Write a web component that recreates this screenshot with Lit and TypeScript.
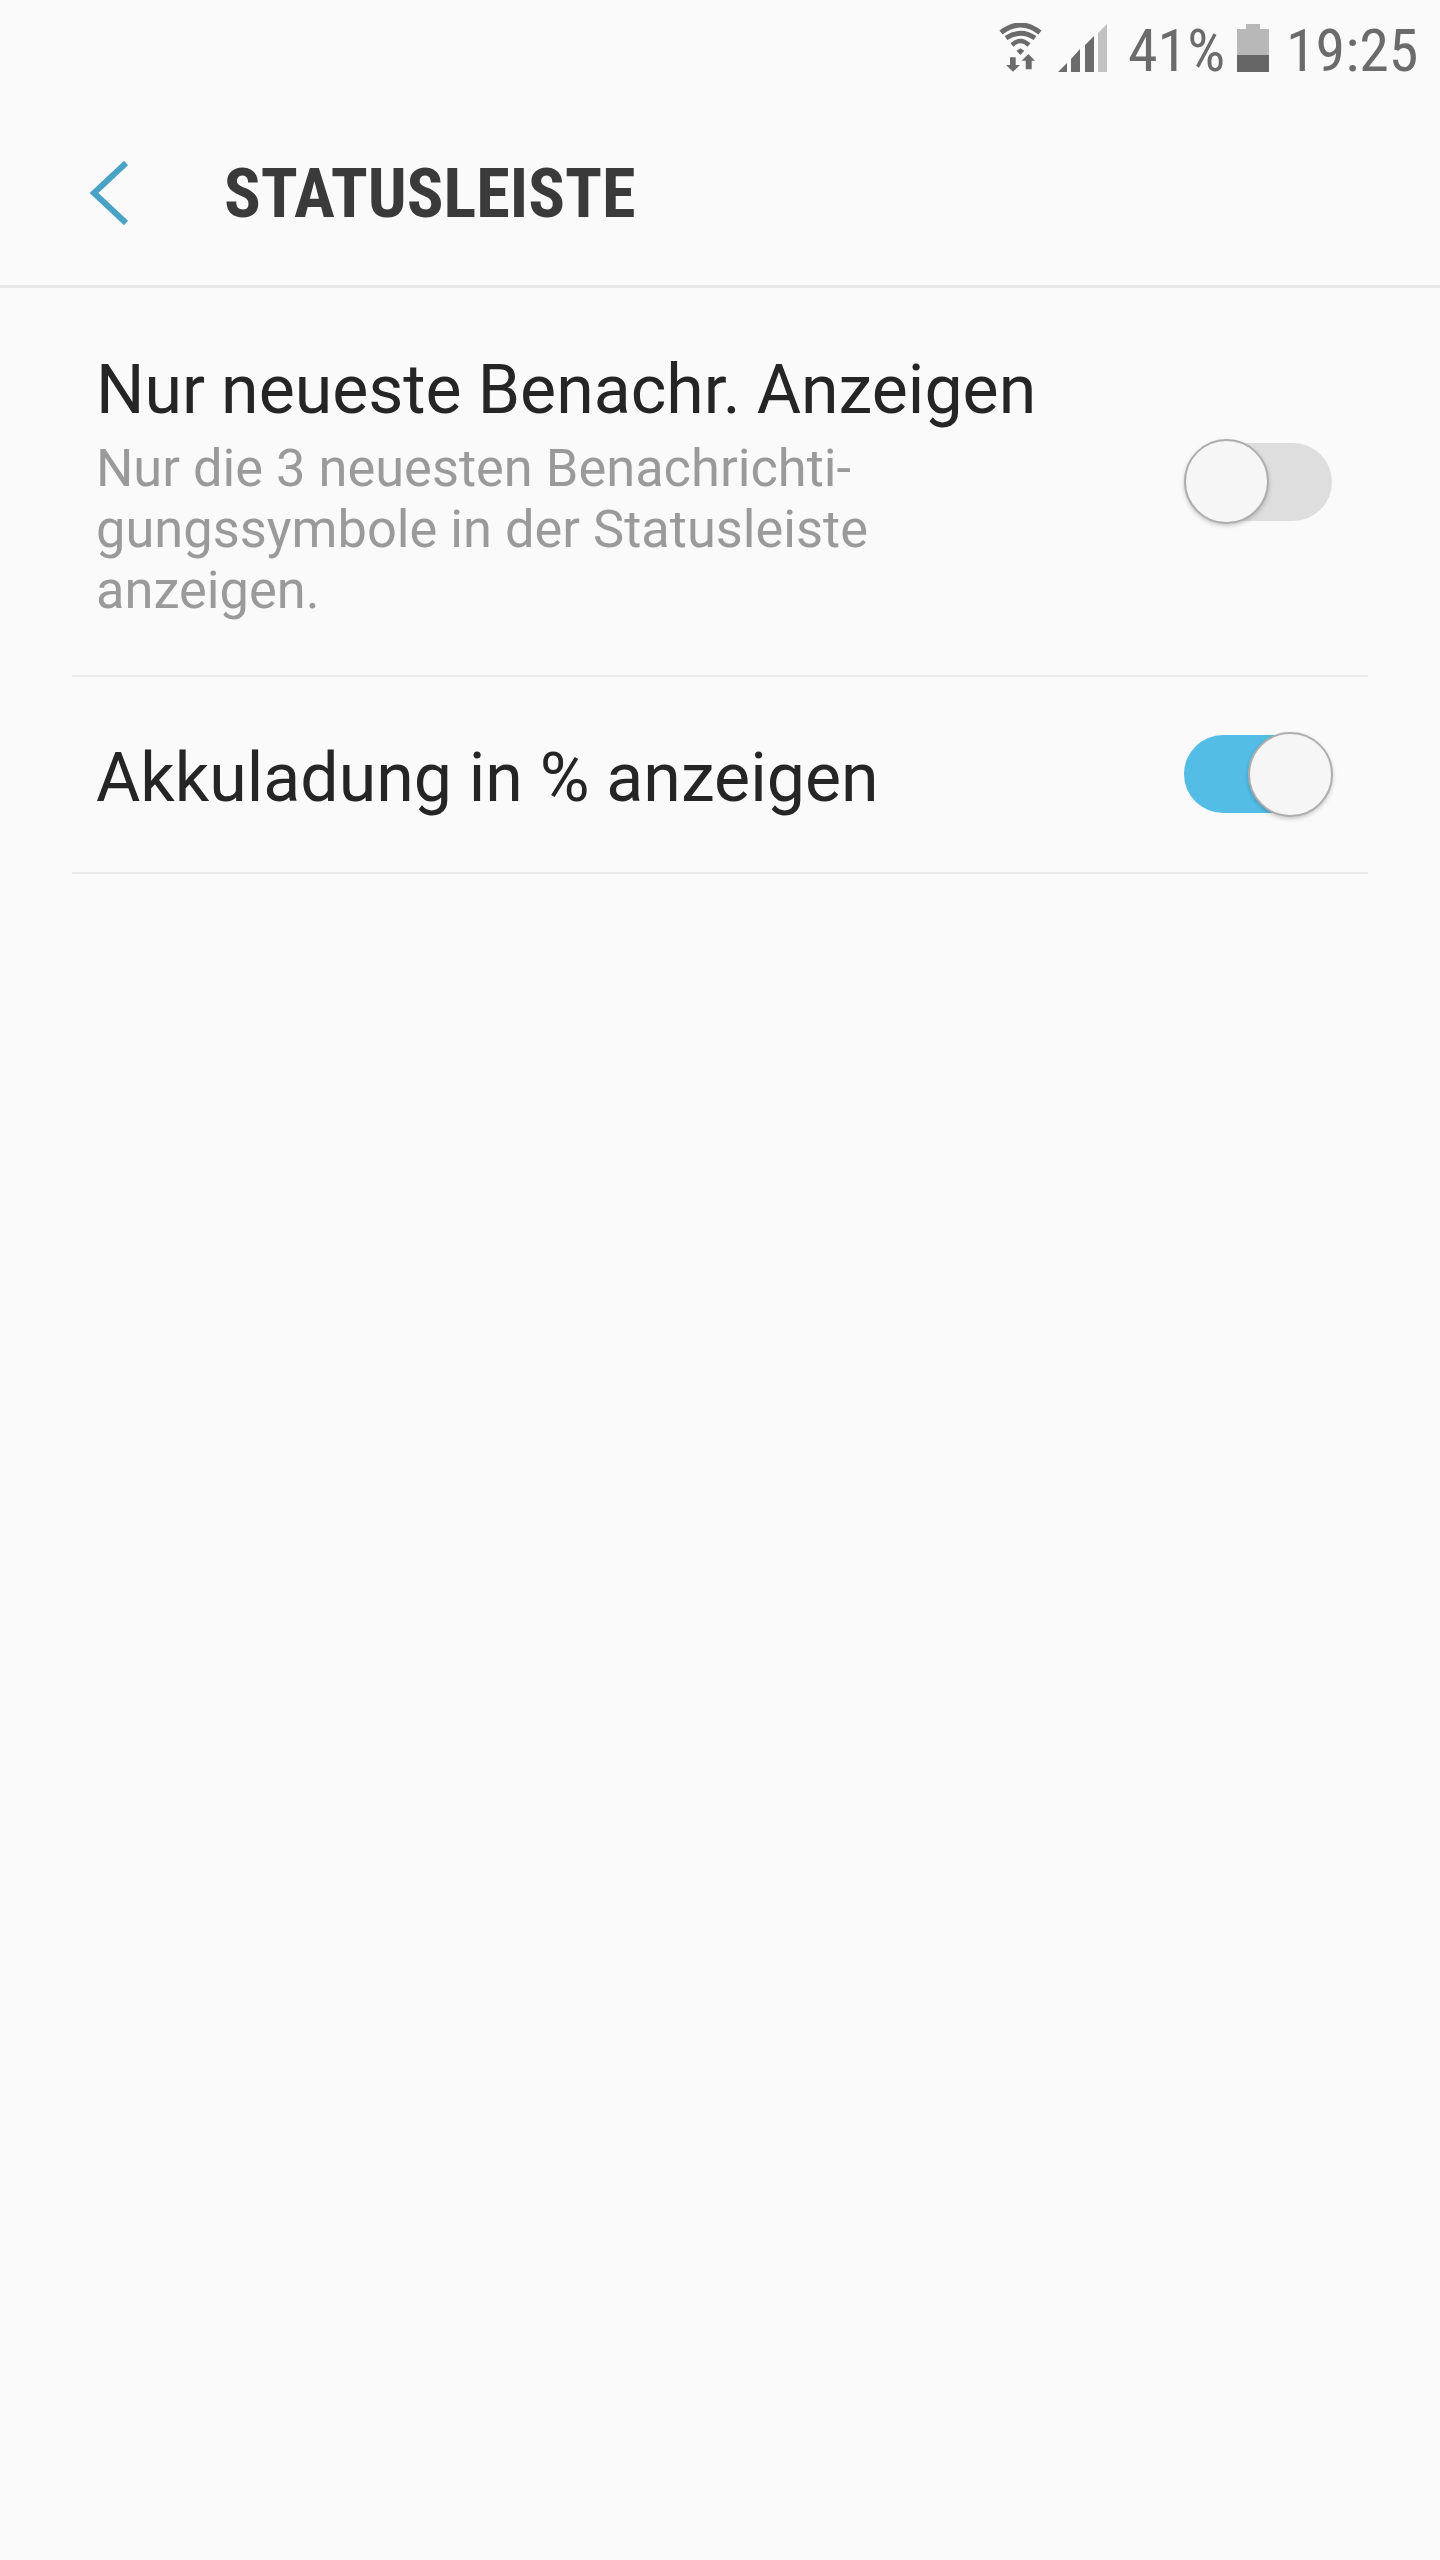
import { LitElement, html, css } from "lit";
import { customElement } from "lit/decorators.js";

@customElement("app-root")
export class AppRoot extends LitElement {
  static styles = css`
    :host { display: block; width: 1440px; height: 2560px; background: #fafafa; font-family: Roboto, "Liberation Sans", sans-serif; overflow: hidden; }
    .status { height: 96px; display: flex; align-items: flex-start; justify-content: flex-end; padding: 24px 23px 0 0; box-sizing: border-box; color: #6b6b6b; }
    .status svg { display: block; flex: none; }
    .wifi { width: 43px; height: 49px; margin-top: -1px; margin-right: 16px; }
    .signal { width: 49px; height: 48px; margin-right: 21px; }
    .battery { width: 32px; height: 48px; margin-right: 17px; }
    .st { font-size: 60px; line-height: 48px; height: 48px; font-stretch: 75%; white-space: nowrap; margin-top: 3px; }
    .pct { width: 109px; }
    .time { width: 131px; }
    .header { height: 192px; box-sizing: border-box; border-bottom: 3px solid #e8e8e8; display: flex; align-items: center; }
    .back { width: 40px; height: 64px; margin-left: 89px; flex: none; margin-top: 4px; }
    .title { margin-left: 95px; font-size: 68.3px; font-weight: 700; font-stretch: 75%; color: #3a3a3a; white-space: nowrap; margin-top: 6px; }
    .row { margin: 0 72px; padding: 0 24px; border-bottom: 2px solid #e8e8e8; display: flex; align-items: center; justify-content: space-between; box-sizing: border-box; }
    .r1 { height: 389px; }
    .r2 { height: 197px; }
    .main { font-size: 68px; color: #252525; line-height: 80px; white-space: nowrap; }
    .r1 .main { margin-bottom: 8px; word-spacing: -0.8px; }
    .r2 .main { margin-top: 6px; }
    .r1 .text { margin-top: 7px; }
    .sub { font-size: 52.4px; color: #9a9a9a; line-height: 61px; width: 860px; }
    .switch { position: relative; width: 148px; height: 78px; border-radius: 39px; background: #dedede; margin-right: 12px; flex: none; }
    .switch.on { background: #54bde5; margin-top: -1px; }
    .thumb { position: absolute; top: -4px; left: 0; width: 85px; height: 85px; box-sizing: border-box; border-radius: 50%; background: #f6f6f6; border: 2px solid #aeaeae; box-shadow: 0 2px 4px rgba(0,0,0,.2); }
    .on .thumb { left: 64px; top: -3px; }
  `;

  render() {
    return html`
      <div class="status">
        <svg class="wifi" viewBox="0 0 43 49" fill="none">
          <path d="M2 9.500 Q21.500 -5.500 41 9.500" stroke="#6b6b6b" stroke-width="5"/>
          <path d="M7 15 Q21.500 5.600 36 15" stroke="#6b6b6b" stroke-width="5"/>
          <path d="M13 22 Q21.500 14 30 22" stroke="#6b6b6b" stroke-width="4.500"/>
          <path d="M17.500 27.700 L21.300 25.300 L25.300 27.700 L21.300 32Z" fill="#6b6b6b"/>
          <path d="M11 34.300 H16.700 V42 H21 L14 48.700 L7 42 H11Z M26.700 46.300 V37.700 H22.700 L29.300 31 L36 37.700 H32.700 V46.300Z" fill="#6b6b6b"/>
        </svg>
        <svg class="signal" viewBox="0 0 49 48">
          <path d="M0 48 L9 39 V48Z M13 48 V35 L22 25 V48Z M27 48 V21 L36 12 V48Z" fill="#6b6b6b"/>
          <path d="M40 48 V9 L49 0 V48Z" fill="#c2c2c2"/>
        </svg>
        <div class="st pct">41%</div>
        <svg class="battery" viewBox="0 0 32 48">
          <path d="M9 0 H23 V5 H32 V31 H0 V5 H9Z" fill="#b8b8b8"/>
          <rect x="0" y="31" width="32" height="17" fill="#666"/>
        </svg>
        <div class="st time">19:25</div>
      </div>
      <div class="header">
        <svg class="back" viewBox="0 0 40 64" fill="none"><path d="M37 2 L5 32 L37 62" stroke="#4aa3c4" stroke-width="6"/></svg>
        <div class="title">STATUSLEISTE</div>
      </div>
      <div class="row r1">
        <div class="text">
          <div class="main">Nur neueste Benachr. Anzeigen</div>
          <div class="sub">Nur die 3 neuesten Benachrichti-<br>gungssymbole in der Statusleiste<br>anzeigen.</div>
        </div>
        <div class="switch"><div class="thumb"></div></div>
      </div>
      <div class="row r2">
        <div class="main">Akkuladung in % anzeigen</div>
        <div class="switch on"><div class="thumb"></div></div>
      </div>
    `;
  }
}
